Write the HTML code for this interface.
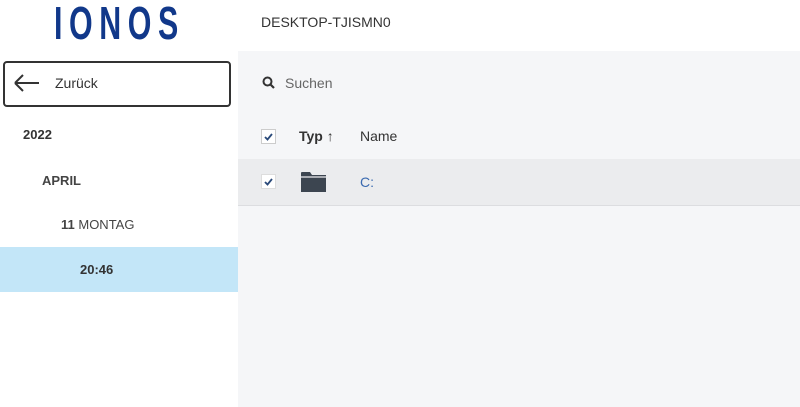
<!DOCTYPE html><html><head><style>
body{margin:0;width:800px;height:407px;position:relative;overflow:hidden;background:#fff;font-family:"Liberation Sans",sans-serif;color:#333}
.a{position:absolute}
</style></head><body>
<div class="a" style="left:238px;top:51px;width:562px;height:356px;background:#f5f6f8"></div>
<div class="a" style="left:238px;top:159px;width:562px;height:46px;background:#ebecee;border-bottom:1px solid #dcdde0"></div>
<div class="a" style="left:54px;top:-4px;font-size:46px;font-weight:bold;color:#11388a;letter-spacing:10px;transform:scaleX(0.66);transform-origin:left">IONOS</div>
<div class="a" style="left:261px;top:14px;font-size:14px;color:#333">DESKTOP-TJISMN0</div>
<div class="a" style="left:3px;top:61px;width:224px;height:42px;border:2px solid #333;border-radius:4px;box-sizing:content-box"></div>
<svg class="a" style="left:14px;top:74px" width="26" height="18"><path d="M1 9H25M1 9L9 1M1 9L9 17" stroke="#333" stroke-width="2" fill="none"/></svg>
<div class="a" style="left:55px;top:75px;font-size:14px">Zurück</div>
<div class="a" style="left:23px;top:127px;font-size:13px;font-weight:bold">2022</div>
<div class="a" style="left:42px;top:173px;font-size:13px;font-weight:bold;color:#444">APRIL</div>
<div class="a" style="left:61px;top:217px;font-size:13px;color:#444"><b>11</b> MONTAG</div>
<div class="a" style="left:0;top:247px;width:238px;height:45px;background:#c3e6f8"></div>
<div class="a" style="left:80px;top:262px;font-size:13px;font-weight:bold">20:46</div>
<svg class="a" style="left:262px;top:76px" width="14" height="14"><circle cx="5.5" cy="5.5" r="4" stroke="#333" stroke-width="2" fill="none"/><path d="M8.5 8.5L12 12" stroke="#333" stroke-width="2.2"/></svg>
<div class="a" style="left:285px;top:75px;font-size:14px;color:#666">Suchen</div>
<div class="a" style="left:261px;top:129px;width:13px;height:13px;border:1px solid #ccc;background:#fff"></div>
<svg class="a" style="left:263px;top:131px" width="11" height="11"><path d="M2 6L4.5 8.5L9 3" stroke="#2a4a7a" stroke-width="1.8" fill="none"/></svg>
<div class="a" style="left:299px;top:128px;font-size:14px;font-weight:bold;color:#333">Typ ↑</div>
<div class="a" style="left:360px;top:128px;font-size:14px;color:#333">Name</div>
<div class="a" style="left:261px;top:174px;width:13px;height:13px;border:1px solid #ddd;background:#fff"></div>
<svg class="a" style="left:263px;top:176px" width="11" height="11"><path d="M2 6L4.5 8.5L9 3" stroke="#2a4a7a" stroke-width="1.8" fill="none"/></svg>
<svg class="a" style="left:301px;top:171px" width="26" height="22"><path d="M0 2Q0 1 1 1H9L11 4H25V21H0Z" fill="#3c4550"/><path d="M0 6H26" stroke="#ebecee" stroke-width="1.2"/></svg>
<div class="a" style="left:360px;top:174px;font-size:14px;color:#3a6ab0">C:</div>
</body></html>
